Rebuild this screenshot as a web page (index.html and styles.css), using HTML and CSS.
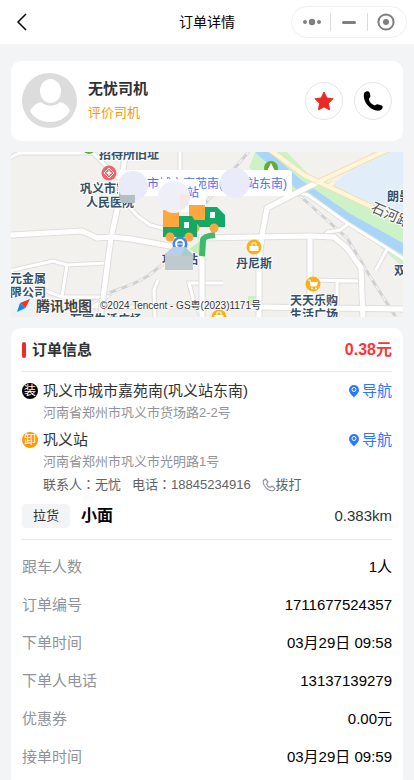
FILE: index.html
```html
<!DOCTYPE html>
<html lang="zh-CN">
<head>
  <meta charset="UTF-8">
  <meta name="viewport" content="width=device-width, initial-scale=1">
  <title>订单详情</title>
  <link rel="stylesheet" href="styles.css">
</head>
<body>

  <header class="navbar">
    <button class="back" aria-label="返回">
      <svg width="12" height="18" viewBox="0 0 12 18"><path d="M10 1 2 9l8 8" fill="none" stroke="#000" stroke-width="1.5"/></svg>
    </button>
    <h1>订单详情</h1>
    <div class="capsule">
      <button aria-label="更多">
        <svg width="20" height="20" viewBox="0 0 20 20" fill="#7f7f7f"><circle cx="3" cy="10" r="2"/><circle cx="10" cy="10" r="3.2"/><circle cx="17" cy="10" r="2"/></svg>
      </button>
      <button aria-label="最小化">
        <svg width="20" height="20" viewBox="0 0 20 20"><path d="M4.500 10.500h11" stroke="#7f7f7f" stroke-width="3" stroke-linecap="round"/></svg>
      </button>
      <button aria-label="关闭">
        <svg width="20" height="20" viewBox="0 0 20 20"><circle cx="10" cy="10" r="7.600" fill="none" stroke="#7f7f7f" stroke-width="2"/><circle cx="10" cy="10" r="3" fill="#7f7f7f"/></svg>
      </button>
    </div>
  </header>

  <main>
    <section class="card driver">
      <svg class="avatar" width="55" height="55" viewBox="0 0 55 55">
        <circle cx="27.500" cy="27.500" r="27.500" fill="#dcdcdc"/>
        <ellipse cx="28.500" cy="18" rx="10.500" ry="12" fill="#fff"/>
        <path d="M8 38c2-4 6-8 11-9 5 5 14 5 19 0 5 1 9 5 10 9-4 7-11 11-20 11S12 45 8 38z" fill="#fff"/>
      </svg>
      <div class="driver-info">
        <strong>无忧司机</strong>
        <a href="#">评价司机</a>
      </div>
      <button class="round" aria-label="收藏">
        <svg width="22" height="22" viewBox="0 0 22 22"><path d="M11 2l2.800 5.900 6.200.9-4.500 4.500 1 6.500L11 16.900l-5.500 2.900 1-6.500L2 8.800l6.200-.9z" fill="#e92a25" stroke="#e92a25" stroke-width="1" stroke-linejoin="round"/></svg>
      </button>
      <button class="round" aria-label="打电话">
        <svg width="22" height="22" viewBox="0 0 22 22"><path d="M2.300 2.800C4 1 6.500.8 7.500 2.200L8.400 6c.2 1.500-1.700 2-1.500 3.300.5 2.700 2.700 5.200 5.400 6 1.300.3 1.900-1.300 3.300-1.100l4.200 1.300c1.700 1 .7 3.500-1 4.500-4 2-9.500-.5-12.500-3.900C2.800 12.500.8 6.500 2.300 2.800z" fill="#000"/></svg>
      </button>
    </section>

    <svg class="map" viewBox="0 0 392 165" preserveAspectRatio="xMidYMid slice" role="img" aria-label="地图">
      <rect width="392" height="165" fill="#f2f1ee"/>

      <!-- green land and water -->
      <path d="M244 0h32l24 25 58 31 34 15v44L340 69l-50-28-18-3-34-22z" fill="#cdf2c8"/>
      <path d="M362 0h30v67l-72-33z" fill="#e1edf8"/>
      <path d="M237 144h13v10h-13z" fill="#cdf2c8"/>
      <path d="M248-3 286 31 338 67 396 99" fill="none" stroke="#a9d5f8" stroke-width="10"/>

      <!-- railways -->
      <g class="rail">
        <path d="M239-2 193 53M288 43 336 86 360 126 388 170M60 155 79 148 122 132 137 124 157 108"/>
      </g>
      <g class="rail-dash">
        <path d="M239-2 193 53M288 43 336 86 360 126 388 170M60 155 79 148 122 132 137 124 157 108"/>
      </g>

      <!-- streets -->
      <g class="edge">
        <path d="M-2 6 9 1H82L110 29M113 50 128 65 139 73 162 79M-2 119 42 109 56 113 96 111M56 113 51 145 24 135M51 145H95L82 155H250M169-2V22M147 128 143 138 144 168M212 131H178L183 150 192 168M299 128 351 129M326 129V156M285 40 297 43 336 71 376 96 394 108M337 72 329 78 317 80 311 85M376 97 365 118"/>
      </g>
      <g class="street">
        <path d="M-2 6 9 1H82L110 29M113 50 128 65 139 73 162 79M-2 119 42 109 56 113 96 111M56 113 51 145 24 135M51 145H95L82 155H250M169-2V22M147 128 143 138 144 168M212 131H178L183 150 192 168M299 128 351 129M326 129V156M285 40 297 43 336 71 376 96 394 108M337 72 329 78 317 80 311 85M376 97 365 118"/>
      </g>
      <g class="edge wide">
        <path d="M115-2 106 58 100 86 96 116 89 168M-2 83 71 79 86 86 102 85 120 87 148 92 175 97M191 168V86L300 84 323 85 336 96 350 116 352 168M299 84V155M245 155 394 157M248 168V110L251 83 256 56 305 31"/>
      </g>
      <g class="street wide">
        <path d="M115-2 106 58 100 86 96 116 89 168M-2 83 71 79 86 86 102 85 120 87 148 92 175 97M191 168V86L300 84 323 85 336 96 350 116 352 168M299 84V155M245 155 394 157M248 168V110L251 83 256 56 305 31"/>
      </g>
      <path d="M258-3 293 23 363 56 394 71M305 31 378-3M317 35 323 30" fill="none" stroke="#f6dfac" stroke-width="6"/>
      <path d="M258-3 293 23 363 56 394 71M305 31 378-3M317 35 323 30" fill="none" stroke="#fff7dc" stroke-width="4"/>

      <!-- places -->
      <circle cx="78" cy="-4" r="6" fill="#62ab34"/>
      <circle cx="260" cy="16" r="7" fill="#62ab34"/>
      <path d="M260 11l4 8h-3v3h-2v-3h-3z" fill="#fff"/>
      <circle cx="98" cy="21" r="7.500" fill="#e8686e"/>
      <path d="M98 16l5 5-5 5-5-5z" fill="none" stroke="#fff" stroke-width="1"/>
      <path d="M98 18.500v5M95.500 21h5" stroke="#fff" stroke-width="1.500"/>
      <g fill="#fbb116">
        <circle cx="243" cy="95" r="7.500"/>
        <circle cx="302" cy="132" r="7.500"/>
        <circle cx="208" cy="165" r="7.500"/>
      </g>
      <g id="bags" fill="#fff">
        <path d="M238.500 94h9v5h-9z"/>
        <path d="M241 94v-3h4v3" fill="none" stroke="#fff" stroke-width="1"/>
        <path d="M203.500 163h9v5h-9z"/>
        <path d="M206 163v-3h4v3" fill="none" stroke="#fff" stroke-width="1"/>
        <path d="M299 130h8l-1 4h-6z"/>
        <circle cx="301" cy="136.500" r="1"/>
        <circle cx="305" cy="136.500" r="1"/>
        <path d="M297 128h2l1 6h5" fill="none" stroke="#fff" stroke-width="1"/>
      </g>
      <g class="place">
        <text x="88" y="7">招待所旧址</text>
        <text x="69" y="41">巩义市第</text>
        <text x="75" y="55">人民医院</text>
        <text x="-1" y="131">元金属</text>
        <text x="-1" y="145">限公司</text>
        <text x="59" y="172">万家生活广场</text>
        <text x="151" y="112">巩义站</text>
        <text x="225" y="116">丹尼斯</text>
        <text x="279" y="153">天天乐购</text>
        <text x="279" y="167">生活广场</text>
        <text x="376" y="49">朗曼</text>
        <text x="383" y="123">双</text>
      </g>
      <text class="road-name" transform="translate(359 59) rotate(24)">石河路</text>

      <!-- route start and end -->
      <path d="M178 97 194 86v20z" fill="#c4efb9"/>
      <path d="M191 104 192 88Q193 84 204 83" fill="none" stroke="#3fb96d" stroke-width="6"/>
      <rect x="107" y="18" width="174" height="26" rx="4" fill="#fff"/>
      <path d="M155 40h40v14l-12 6h-28z" fill="#fff"/>
      <text class="bubble" x="112" y="36">巩义市城市嘉苑南(巩义站东南)</text>
      <path d="M148 27h40v11h-40z" fill="#fff"/>
      <text class="bubble" x="176" y="45">站</text>

      <g id="trucks">
        <path d="M178 53h16v15h-16z" fill="#ffa63f"/>
        <path d="M176 68h18V55h12l8 8v12h-38z" fill="#14a866"/>
        <path d="M199 60h5v6h-5z" fill="#fff"/>
        <circle cx="184" cy="76" r="4.500" fill="#ffa63f"/>
        <circle cx="203" cy="76" r="4.500" fill="#ffa63f"/>
        <path d="M152 75h16V64h13l5 8v13h-34z" fill="#14a866"/>
        <path d="M152 58h16v17h-16z" fill="#ffa63f"/>
        <path d="M173 70h5v6h-5z" fill="#fff"/>
        <circle cx="159" cy="85" r="4.500" fill="#ffa63f"/>
        <circle cx="178" cy="85" r="4.500" fill="#ffa63f"/>
      </g>
      <circle cx="169" cy="92" r="7.500" fill="#4c80ec"/>
      <circle cx="169" cy="92" r="4" fill="none" stroke="#fff" stroke-width="2"/>
      <path d="M166 92h6" stroke="#fff" stroke-width="1"/>
      <path d="M108 28h8v16h8v7h-14l-2-7z" fill="#b3bec5"/>
      <circle cx="122" cy="34" r="15" fill="#eaebf8"/>
      <path d="M110 43h14v8h-14z" fill="#b3bec5"/>
      <circle cx="163" cy="45" r="16" fill="#efeff8"/>
      <path d="M169 43h10c0 7-4 12-10 15z" fill="#f3e8e8"/>
      <circle cx="224" cy="31" r="15" fill="#e9ebfb"/>
      <path d="M154 102l8-7h12l8 7v16h-28z" fill="#bfc9ce"/>
      <path d="M154 104l8-9h12l-4 9z" fill="#b9cee7"/>
      <path d="M174 95l8 9h-12z" fill="#a2d0c5"/>

      <!-- map provider -->
      <rect x="3" y="144" width="19" height="18" rx="5" fill="#e8f4fb"/>
      <path d="M19 147 14.500 156 9 151z" fill="#ed3829"/>
      <path d="M6 160 9 151 14.500 156z" fill="#1685f8"/>
      <text class="brand" x="25" y="159">腾讯地图</text>
      <text class="copyright" x="89" y="157">©2024 Tencent - GS粤(2023)1171号</text>
    </svg>

    <section class="card order">
      <div class="order-head">
        <h2>订单信息</h2>
        <strong class="price">0.38元</strong>
      </div>

      <div class="stops">
        <div class="stop">
          <span class="badge load">装</span>
          <span class="stop-name">巩义市城市嘉苑南(巩义站东南)</span>
          <a class="nav-link" href="#">
            <svg width="12" height="14" viewBox="0 0 12 14"><path d="M6 1a5 5 0 0 1 5 5c0 3-3 5-5 7.500C4 11 1 9 1 6a5 5 0 0 1 5-5z" fill="#2979ff"/><circle cx="6" cy="5.500" r="2" fill="none" stroke="#fff" stroke-width="1"/></svg>导航
          </a>
          <p class="address">河南省郑州市巩义市货场路2-2号</p>
        </div>
        <div class="stop">
          <span class="badge unload">卸</span>
          <span class="stop-name">巩义站</span>
          <a class="nav-link" href="#">
            <svg width="12" height="14" viewBox="0 0 12 14"><path d="M6 1a5 5 0 0 1 5 5c0 3-3 5-5 7.500C4 11 1 9 1 6a5 5 0 0 1 5-5z" fill="#2979ff"/><circle cx="6" cy="5.500" r="2" fill="none" stroke="#fff" stroke-width="1"/></svg>导航
          </a>
          <p class="address">河南省郑州市巩义市光明路1号</p>
          <p class="contact">
            <span>联系人<i lang="zh-TW">：</i>无忧</span>
            <span>电话<i lang="zh-TW">：</i>18845234916</span>
            <a href="tel:18845234916">
              <svg width="14" height="14" viewBox="0 0 14 14"><path d="M1.500 2.500 3.500 1 6 4 4.500 6c.5 1.500 2 3 3.500 3.500L10 8l3 2.500-1.500 2C6.500 14 0 7.500 1.500 2.500z" fill="none" stroke="#909399" stroke-width="1.200" stroke-linejoin="round"/></svg>拨打
            </a>
          </p>
        </div>
      </div>

      <div class="goods">
        <span class="tag">拉货</span>
        <strong>小面</strong>
        <span class="distance">0.383km</span>
      </div>

      <dl class="details">
        <div><dt>跟车人数</dt><dd>1人</dd></div>
        <div><dt>订单编号</dt><dd>1711677524357</dd></div>
        <div><dt>下单时间</dt><dd>03月29日 09:58</dd></div>
        <div><dt>下单人电话</dt><dd>13137139279</dd></div>
        <div><dt>优惠券</dt><dd>0.00元</dd></div>
        <div><dt>接单时间</dt><dd>03月29日 09:59</dd></div>
      </dl>
    </section>
  </main>

</body>
</html>
```
FILE: styles.css
```css
* {
  box-sizing: border-box;
}

body {
  margin: 0;
  font-family: "Liberation Sans", "Noto Sans CJK SC", sans-serif;
  font-size: 15px;
  line-height: 22px;
  background: #f3f4f6;
  color: #303133;
}

h1, h2, p, dl, dd {
  margin: 0;
}

button {
  display: flex;
  align-items: center;
  justify-content: center;
  padding: 0;
  border: none;
  background: none;
  cursor: pointer;
}

a {
  text-decoration: none;
}

.navbar {
  display: grid;
  grid-template-columns: 1fr auto 1fr;
  align-items: center;
  height: 44px;
  padding: 0 7px;
  background: #fff;
}

.navbar h1 {
  font-size: 14px;
  font-weight: normal;
  color: #000;
}

.back {
  justify-self: start;
  padding-left: 9px;
}

.capsule {
  display: flex;
  align-items: center;
  justify-self: end;
  width: 116px;
  height: 32px;
  padding: 0 2px;
  border: 1px solid #f0f0f0;
  border-radius: 16px;
}

.capsule button {
  flex: 1;
  height: 18px;
}

.capsule button + button {
  border-left: 1px solid #dcdcdc;
}

main {
  display: flex;
  flex-direction: column;
  gap: 11px;
  padding: 17px 11px 0;
}

.card {
  background: #fff;
  border-radius: 10px;
  padding: 0 11px;
}

.driver {
  display: flex;
  align-items: center;
  gap: 11px;
  height: 80px;
}

.avatar {
  margin-bottom: 2px;
}

.driver-info {
  display: flex;
  flex-direction: column;
  flex: 1;
  line-height: 24px;
}

.driver-info a {
  font-size: 13px;
  color: #ff9900;
}

.round {
  width: 38px;
  height: 38px;
  border: 1px solid #e4e4ee;
  border-radius: 50%;
}

.map {
  display: block;
  width: 100%;
  height: 165px;
}

.rail {
  fill: none;
  stroke: #d0d0d0;
  stroke-width: 3;
}

.rail-dash {
  fill: none;
  stroke: #efefef;
  stroke-width: 2;
  stroke-dasharray: 6 6;
}

.edge {
  fill: none;
  stroke: #dededc;
  stroke-width: 5;
}

.street {
  fill: none;
  stroke: #fff;
  stroke-width: 3;
}

.edge.wide {
  stroke-width: 7;
}

.street.wide {
  stroke-width: 5;
}

.place {
  font-size: 12px;
  font-weight: bold;
  fill: #34516a;
  stroke: #fff;
  stroke-width: 2px;
  paint-order: stroke;
}

.road-name {
  font-size: 14px;
  fill: #555;
  stroke: #fff;
  stroke-width: 2px;
  paint-order: stroke;
}

.bubble {
  font-size: 12px;
  fill: #4e6ef2;
}

.brand {
  font-size: 14px;
  font-weight: bold;
  fill: #444;
  stroke: #fff;
  stroke-width: 2px;
  paint-order: stroke;
}

.copyright {
  font-size: 10px;
  fill: #333;
  stroke: #fff;
  stroke-width: 1px;
  paint-order: stroke;
}

.order {
  padding-bottom: 11px;
}

.order-head {
  display: flex;
  align-items: center;
  justify-content: space-between;
  height: 44px;
  border-bottom: 1px solid #e4e7ed;
}

.order-head h2 {
  display: flex;
  align-items: center;
  gap: 6px;
  font-size: 15px;
}

.order-head h2::before {
  content: "";
  width: 4px;
  height: 16px;
  border-radius: 2px;
  background: #ee2b2b;
}

.price {
  font-size: 16px;
  color: #ff3333;
}

.stops {
  display: flex;
  flex-direction: column;
  gap: 5px;
  padding-top: 8px;
}

.stop {
  display: grid;
  grid-template-columns: 16px 1fr auto;
  align-items: center;
  column-gap: 5px;
}

.badge {
  width: 16px;
  height: 16px;
  border-radius: 50%;
  font-size: 12px;
  line-height: 16px;
  text-align: center;
  color: #fff;
}

.load {
  background: #000;
}

.unload {
  background: #ff9900;
}

.nav-link {
  display: flex;
  align-items: center;
  gap: 2px;
  color: #2979ff;
}

.address,
.contact {
  grid-column: 2 / -1;
  font-size: 13px;
}

.address {
  color: #909399;
}

.contact {
  display: flex;
  gap: 11px;
  color: #606266;
}

.contact i {
  font-family: "Noto Sans CJK TC", sans-serif;
  font-style: normal;
}

.contact a {
  display: flex;
  align-items: center;
  color: inherit;
}

.goods {
  display: flex;
  align-items: center;
  gap: 11px;
  padding: 8px 0 11px;
  border-bottom: 1px solid #e4e7ed;
}

.tag {
  padding: 0 11px;
  border-radius: 4px;
  background: #f3f4f6;
  font-size: 13px;
  line-height: 24px;
}

.goods strong {
  font-size: 16px;
  color: #000;
}

.distance {
  margin-left: auto;
}

.details {
  padding-top: 8px;
}

.details div {
  display: flex;
  justify-content: space-between;
  line-height: 38px;
}

.details dt {
  color: #909399;
}

.details dd {
  color: #000;
}
```
